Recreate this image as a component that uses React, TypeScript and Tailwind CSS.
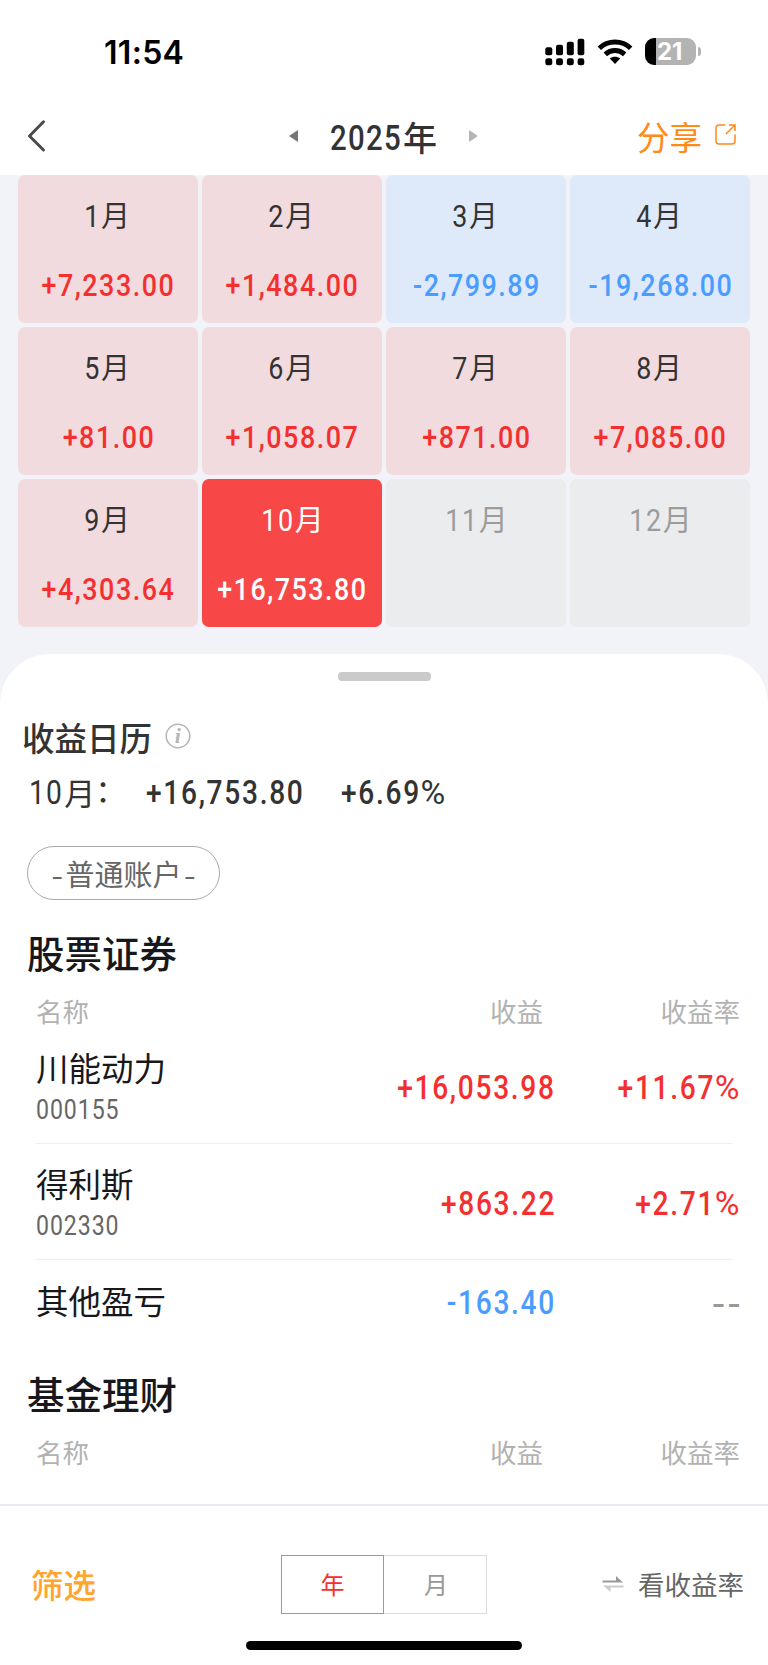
import clsx from "clsx";

interface Month {
  month: number;
  value?: string;
}

interface Holding {
  name: string;
  code?: string;
  profit: string;
  rate: string;
}

const months: Month[] = [
  { month: 1, value: "+7,233.00" },
  { month: 2, value: "+1,484.00" },
  { month: 3, value: "-2,799.89" },
  { month: 4, value: "-19,268.00" },
  { month: 5, value: "+81.00" },
  { month: 6, value: "+1,058.07" },
  { month: 7, value: "+871.00" },
  { month: 8, value: "+7,085.00" },
  { month: 9, value: "+4,303.64" },
  { month: 10, value: "+16,753.80" },
  { month: 11 },
  { month: 12 },
];

const holdings: Holding[] = [
  { name: "川能动力", code: "000155", profit: "+16,053.98", rate: "+11.67%" },
  { name: "得利斯", code: "002330", profit: "+863.22", rate: "+2.71%" },
  { name: "其他盈亏", profit: "-163.40", rate: "--" },
];

const SELECTED = 10;

// Narrow digits, close to the DIN look; the percent sign is wider than the digits
const Num = ({ children, className }: { children: string | number; className?: string }) => {
  const text = String(children);
  const percent = text.endsWith("%");
  return (
    <span
      className={clsx(
        "inline-block scale-x-[0.84] whitespace-nowrap font-['Roboto','Noto_Sans_CJK_SC',sans-serif] leading-none",
        className
      )}
    >
      {percent ? text.slice(0, -1) : text}
      {percent && <span className="ml-[5px] inline-block origin-right scale-x-[1.2] font-normal">%</span>}
    </span>
  );
};

const StatusBar = () => (
  <div className="flex h-[96px] items-center justify-between pt-[9px] pr-[67px] pl-[104px]">
    <span className="font-['Inter',sans-serif] text-[32px] leading-none font-semibold tracking-[0.3px] text-black">11:54</span>
    <div className="flex items-center pb-[2px]">
      <svg width="40" height="28" viewBox="0 0 40 28" fill="#000">
        <rect x="0.3" y="9.3" width="7" height="8" rx="2" />
        <rect x="11" y="6.7" width="7" height="10.6" rx="2" />
        <rect x="21.8" y="3.7" width="7" height="13.6" rx="2" />
        <rect x="32.6" y="0.7" width="6.7" height="16.6" rx="2" />
        <rect x="0.3" y="20.3" width="7" height="7" rx="2.4" />
        <rect x="11" y="20.3" width="7" height="7" rx="2.4" />
        <rect x="21.8" y="20.3" width="7" height="7" rx="2.4" />
        <rect x="32.6" y="20.3" width="6.7" height="7" rx="2.4" />
      </svg>
      <svg className="ml-3" width="36" height="28" viewBox="0 0 36 28" fill="none" stroke="#000" strokeWidth="5">
        <path d="M2.3 10.2C11 2 25 2 33.700 10.200" />
        <path d="M8.300 16.300C14 11.200 22 11.200 27.700 16.300" />
        <path d="M18 26L12.800 20.600C15.700 18 20.300 18 23.200 20.600Z" fill="#000" stroke="none" />
      </svg>
      <div className="ml-3 flex h-[27px] w-[51px] items-center overflow-hidden rounded-[9px] bg-[linear-gradient(to_right,#000_11px,#b3b3b3_11px)] pl-[12px]">
        <span className="font-['Inter',sans-serif] text-[24px] leading-none font-bold text-white">21</span>
      </div>
      <div className="ml-[2px] h-[9px] w-[3px] rounded-r-full bg-[#b3b3b3]" />
    </div>
  </div>
);

const NavBar = () => (
  <div className="flex h-[79px] items-center pr-[32px] pl-[27px]">
    <div className="flex w-[271px] items-center justify-between">
      <svg width="20" height="34" viewBox="0 0 20 34" fill="none" stroke="#4a4a4a" strokeWidth="3" strokeLinecap="round" strokeLinejoin="round">
        <path d="M16.500 2.800L2.500 17L16.500 31" />
      </svg>
      <svg width="9" height="12" viewBox="0 0 9 12" fill="#777">
        <path d="M0 6L9 0V12Z" />
      </svg>
    </div>
    <div className="ml-[32px] flex w-[107px] items-center justify-between text-[#333]">
      <Num className="mr-[-14px] origin-left pt-[5px] text-[35px] font-medium tracking-[1.5px]">2025</Num>
      <span className="pt-[2px] text-[34px] leading-none font-medium">年</span>
    </div>
    <svg className="ml-[32px]" width="9" height="12" viewBox="0 0 9 12" fill="#b5b5b5">
      <path d="M9 6L0 0V12Z" />
    </svg>
    <div className="ml-auto flex items-center text-[#ff8b17]">
      <span className="pt-[2px] text-[32.500px] leading-none">分享</span>
      <svg className="mt-[-2px] ml-[13px]" width="21" height="21" viewBox="0 0 21 21" fill="none" stroke="currentColor" strokeWidth="1.500">
        <path d="M10.500 1H4A3 3 0 0 0 1 4V17A3 3 0 0 0 4 20H17A3 3 0 0 0 20 17V10.500M14 1H20V7M20 1L11 10" />
      </svg>
    </div>
  </div>
);

const MonthCell = ({ month, value }: Month) => {
  const selected = month === SELECTED;
  const loss = value?.startsWith("-");
  return (
    <div
      className={clsx(
        "flex h-[148px] flex-col items-center rounded-[7px]",
        !value && "bg-[#ebecee] text-[#9c9c9c]",
        selected && "bg-[#f84747] text-white",
        value && !selected && (loss ? "bg-[#dee9fa] text-[#333]" : "bg-[#f1dbde] text-[#333]")
      )}
    >
      <div className="mt-[24px] flex h-[34px] items-center pr-[5px]">
        <Num className="origin-right text-[32px] tracking-[1.800px]">{month}</Num>
        <span className="mt-[-3px] text-[29px] leading-none">月</span>
      </div>
      {value && (
        <Num
          className={clsx(
            "mt-[36px] pl-[2px] text-[32px] font-medium tracking-[1.800px]",
            !selected && (loss ? "text-[#4a9cff]" : "text-[#f52f2f]")
          )}
        >
          {value}
        </Num>
      )}
    </div>
  );
};

const TableHead = () => (
  <div className="flex h-[26px] items-center text-[26.500px] leading-none text-[#b2b2b2]">
    <span className="w-[240px]">名称</span>
    <span className="w-[267px] text-right">收益</span>
    <span className="flex-1 text-right">收益率</span>
  </div>
);

const HoldingRow = ({ name, code, profit, rate }: Holding) => (
  <div className={clsx("flex items-center", code ? "h-[115px]" : "h-[84px]")}>
    <div className={clsx("flex w-[240px] flex-col", !code && "pb-[5px]")}>
      <span className="text-[32.500px] leading-[40px] text-[#18181c]">{name}</span>
      {code && <Num className="mt-[9px] origin-left text-[27.500px] tracking-[1.100px] text-[#666]">{code}</Num>}
    </div>
    <div
      className={clsx(
        "flex w-[280px] justify-end",
        code ? "pt-[5px]" : "pt-[2px]",
        profit.startsWith("-") ? "text-[#4a9cff]" : "text-[#f52f2f]"
      )}
    >
      <Num className="origin-right text-[33.500px] font-medium tracking-[2px]">{profit}</Num>
    </div>
    <div className={clsx("mr-[-2px] flex flex-1 justify-end", code ? "pt-[5px]" : "pt-[6px]")}>
      {rate === "--" ? (
        <span className="mr-[-1px] origin-right scale-x-[1.15] font-['Roboto',sans-serif] text-[33.500px] leading-none font-medium tracking-[2px] text-[#999]">
          {rate}
        </span>
      ) : (
        <Num className="origin-right text-[33.500px] font-medium tracking-[2px] text-[#f52f2f]">{rate}</Num>
      )}
    </div>
  </div>
);

export default function App() {
  return (
    <div className="flex h-[1665px] w-[768px] flex-col overflow-hidden bg-white font-['Noto_Sans_CJK_SC',sans-serif]">
      <StatusBar />
      <NavBar />

      <div className="bg-[#f2f3f9]">
        <div className="grid grid-cols-4 gap-1 px-[18px] pb-[27px]">
          {months.map((m) => (
            <MonthCell key={m.month} {...m} />
          ))}
        </div>

        {/* Bottom sheet */}
        <div className="h-[850px] rounded-t-[50px] bg-white pt-[18px]">
          <div className="mx-auto h-[9px] w-[93px] rounded-[4px] bg-[#cacaca]" />

          <div className="mt-[37px] flex h-[38px] items-center pl-[22px] text-[#333]">
            <h2 className="text-[32.500px] leading-none font-medium">收益日历</h2>
            <svg className="mt-[-3px] ml-[13px]" width="26" height="26" viewBox="0 0 26 26">
              <circle cx="13" cy="13" r="11.800" fill="none" stroke="#b5b5b5" strokeWidth="1.500" />
              <text x="12.700" y="20" textAnchor="middle" fontFamily="Liberation Serif, serif" fontStyle="italic" fontWeight="700" fontSize="22" fill="#b5b5b5">
                i
              </text>
            </svg>
          </div>

          <div className="mt-[17px] flex h-[40px] items-center pl-[29px] text-[#333]">
            <div className="flex w-[117px] items-center">
              <Num className="mr-[-5px] origin-left text-[33.500px] tracking-[1.300px]">10</Num>
              <span className="mt-[-4px] text-[31px] leading-none">月</span>
              <span className="mt-[-9px] text-[31px] leading-none">：</span>
            </div>
            <Num className="w-[195px] origin-left text-[33.500px] font-medium tracking-[2px]">+16,753.80</Num>
            <Num className="origin-left text-[33.500px] font-medium tracking-[2px]">+6.69%</Num>
          </div>

          <div className="mt-[33px] ml-[27px] flex h-[54px] w-[193px] items-center justify-center rounded-full border border-[#aaa] pt-px text-[29px] leading-none text-[#666]">
            <span className="mr-[2px] origin-right scale-x-[1.15]">-</span>普通账户
            <span className="ml-[2px] origin-left scale-x-[1.15]">-</span>
          </div>

          <h3 className="mt-[32px] pl-[27px] text-[37.500px] leading-[40px] font-medium text-[#18181c]">股票证券</h3>
          <div className="mt-[26px] pr-[28px] pl-[36px]">
            <TableHead />
            <div className="mt-[4px]">
              {holdings.map((h, i) => (
                <div key={h.name}>
                  {i > 0 && <div className="mr-2 h-px bg-[#eee]" />}
                  <HoldingRow {...h} />
                </div>
              ))}
            </div>
          </div>

          <h3 className="mt-[29px] pl-[27px] text-[37.500px] leading-[40px] font-medium text-[#18181c]">基金理财</h3>
          <div className="mt-[26px] pr-[28px] pl-[36px]">
            <TableHead />
          </div>
        </div>
      </div>

      {/* Bottom bar */}
      <div className="flex h-[161px] flex-col items-center justify-between border-t-2 border-[#ebebf3] bg-white pb-[15px]">
        <div className="mt-[48px] flex h-[60px] w-full items-center pr-[24px] pl-[31px]">
          <span className="w-[250px] pt-px text-[32.500px] leading-none font-medium text-[#ffa52e]">筛选</span>
          <div className="flex h-[59px] text-[24px]">
            <button className="w-[103px] border border-[#f87272] text-[#f52f2f]">年</button>
            <button className="w-[103px] border border-l-0 border-[#dcdcdc] pl-[2px] text-[#999]">月</button>
          </div>
          <div className="ml-auto flex items-center text-[#666]">
            <svg width="22" height="18" viewBox="0 0 22 18">
              <path d="M0.500 5.500H14V1L21 7.500H0.500Z" fill="#999" />
              <path d="M21.500 10.500V12.500H8.500V17L1 10.500Z" fill="#ccc" />
            </svg>
            <span className="ml-[14px] pt-px text-[26.500px] leading-none">看收益率</span>
          </div>
        </div>
        <div className="h-[9px] w-[276px] rounded-full bg-black" />
      </div>
    </div>
  );
}
